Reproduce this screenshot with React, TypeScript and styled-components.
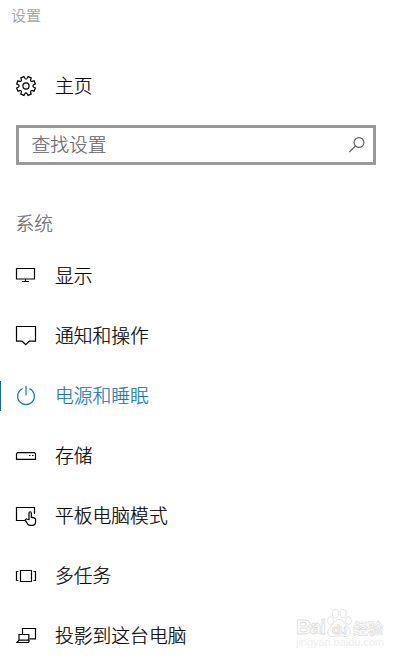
import React from "react";
import styled, { createGlobalStyle } from "styled-components";

const GlobalStyle = createGlobalStyle`
  * { box-sizing: border-box; }
  html, body { margin: 0; background: #fff; overflow: hidden; }
`;

const Page = styled.main`
  position: relative;
  width: 413px;
  height: 660px;
  overflow: hidden;
  background: #fff;
  color: #000;
  font-family: "Noto Sans CJK SC", sans-serif;
  font-weight: 300;
  font-size: 18.8px;
  -webkit-text-stroke: 0.2px currentColor;
`;

const TitleBar = styled.header`
  height: 30px;
  padding-left: 11px;
  font-size: 15px;
  line-height: 30px;
  color: #999;
`;

const Row = styled.a<{ $active?: boolean }>`
  display: flex;
  align-items: center;
  gap: 18px;
  height: 60px;
  padding-left: 15px;
  color: ${(p) => (p.$active ? "#1879b0" : "#000")};
`;

const HomeRow = styled(Row)`
  margin-top: 26px;
`;

const Label = styled.span`
  line-height: 28px;
  padding-bottom: 2px;
  white-space: nowrap;
`;

const ActiveMark = styled.i`
  width: 1px;
  height: 30px;
  margin-left: -15px;
  margin-right: -4px;
  background: #1f6686;
`;

const SearchBox = styled.div`
  display: flex;
  align-items: center;
  justify-content: space-between;
  width: 360px;
  height: 40px;
  margin: 9px 0 0 16px;
  padding: 0 8px 0 12.5px;
  border: 3px solid #999;
  color: #666;
`;

const SearchText = styled.span`
  line-height: 28px;
  padding-bottom: 3px;
`;

const Heading = styled.h2`
  height: 28px;
  margin: 44px 0 9px 15.5px;
  font-size: 18.8px;
  font-weight: 300;
  line-height: 28px;
  color: #6c6c6c;
`;

const Svg = styled.svg`
  flex: none;
  display: block;
  fill: none;
  stroke: currentColor;
  stroke-width: 1.2;
`;

const Watermark = styled.div`
  position: absolute;
  left: 295px;
  top: 603px;
  width: 92px;
  height: 50px;
  -webkit-text-stroke: 0;
`;

/* Eight-toothed cog outline centred in a 22px box. */
const gearPath = (() => {
  const pts: string[] = [];
  for (let i = 0; i < 8; i++) {
    const base = (i * 45 + 22.5) * (Math.PI / 180);
    const at = (r: number, d: number) => {
      const a = base + (d * Math.PI) / 180;
      return `${(11 + r * Math.cos(a)).toFixed(2)} ${(11 + r * Math.sin(a)).toFixed(2)}`;
    };
    pts.push(`${i ? "L" : "M"}${at(9.6, -10)}L${at(9.6, 10)}L${at(7.8, 14)}Q${at(6, 22.5)} ${at(7.8, 31)}`);
  }
  return pts.join("") + "Z";
})();

const icons: Record<string, React.ReactNode> = {
  gear: (
    <>
      <path d={gearPath} />
      <circle cx="11" cy="11" r="3.1" />
    </>
  ),
  display: <path d="M1.5 3.500h18v10.500h-18zM10.500 14v2.500M7 16.500h7" />,
  notify: <path d="M1.500 1.500h19v14.700h-6.200l-3.600 3.400-3.600-3.400H1.500z" />,
  power: <path d="M7.600 3.500a8.400 8.400 0 1 0 6.800 0M11 .8v9.700" />,
  storage: (
    <>
      <path d="M2.500 7.600h17l1 1.400v5.400h-19V9z" />
      <path d="M14 10.500h1.500M17 10.500h1.500" />
    </>
  ),
  tablet: (
    <>
      <path d="M10 15.500H1.500v-13h18V9" />
      <path d="M14 14.500V8.200c0-1.900 2.300-1.900 2.300 0v4l2.800.7q1.500.4 1.500 1.700v2.200q0 3.600-3.500 3.600h-1.800q-1.600 0-2.500-1.300l-2.300-3.500c-.8-1.300.8-2.200 1.700-1.300z" />
    </>
  ),
  tasks: <path d="M5.500 5.500h11v11h-11zM3.500 6.500h-2v9h2M18.500 6.500h2v9h-2" />,
  project: (
    <>
      <path d="M7.500 9V3.500h13v10.300H14.500" />
      <path d="M4 9.500h9.800v5.700H4zM4 15.200l-2 2.300h11.600l.8-2.300" />
    </>
  ),
};

const Icon = ({ name }: { name: string }) => (
  <Svg width="22" height="22" viewBox="0 0 22 22">
    {icons[name]}
  </Svg>
);

const items = [
  { icon: "display", label: "显示" },
  { icon: "notify", label: "通知和操作" },
  { icon: "power", label: "电源和睡眠", active: true },
  { icon: "storage", label: "存储" },
  { icon: "tablet", label: "平板电脑模式" },
  { icon: "tasks", label: "多任务" },
  { icon: "project", label: "投影到这台电脑" },
];

export default function App() {
  return (
    <Page>
      <GlobalStyle />
      <TitleBar>设置</TitleBar>
      <HomeRow>
        <Icon name="gear" />
        <Label>主页</Label>
      </HomeRow>
      <SearchBox>
        <SearchText>查找设置</SearchText>
        <Svg width="18" height="18" viewBox="0 0 18 18">
          <circle cx="12" cy="6.500" r="4.900" />
          <path d="M8.500 10L2.300 16" />
        </Svg>
      </SearchBox>
      <Heading>系统</Heading>
      <nav>
        {items.map((it) => (
          <Row key={it.label} $active={it.active}>
            {it.active && <ActiveMark />}
            <Icon name={it.icon} />
            <Label>{it.label}</Label>
          </Row>
        ))}
      </nav>
      <Watermark>
        <svg width="92" height="50" viewBox="0 0 92 50" fill="#fff" stroke="#e0e0e0" strokeWidth="0.9">
          <text x="1" y="31" fontFamily="Liberation Sans" fontWeight="700" fontSize="21" textLength="30">Bai</text>
          <ellipse cx="35.500" cy="17.500" rx="3" ry="4" />
          <ellipse cx="40.500" cy="10.500" rx="3" ry="4.300" />
          <ellipse cx="48" cy="10.500" rx="3" ry="4.300" />
          <ellipse cx="53.500" cy="17.500" rx="3" ry="4" />
          <path d="M44 16.500c4 0 5 4 8 6.500 6 5 3 11-2 10.500-4-.8-8-.8-12 0-6 .5-7-6-2-10.500 3-2.500 4-6.500 8-6.500z" />
          <text x="37" y="31" fontFamily="Liberation Sans" fontWeight="700" fontSize="13" textLength="15">du</text>
          <text x="58" y="31" strokeWidth="0.7" fontFamily="Noto Sans CJK SC" fontWeight="700" fontSize="15" textLength="30">经验</text>
          <text x="1" y="43" fill="#f0f0f0" stroke="none" fontFamily="Liberation Sans" fontSize="11" textLength="88">jingyan.baidu.com</text>
        </svg>
      </Watermark>
    </Page>
  );
}
